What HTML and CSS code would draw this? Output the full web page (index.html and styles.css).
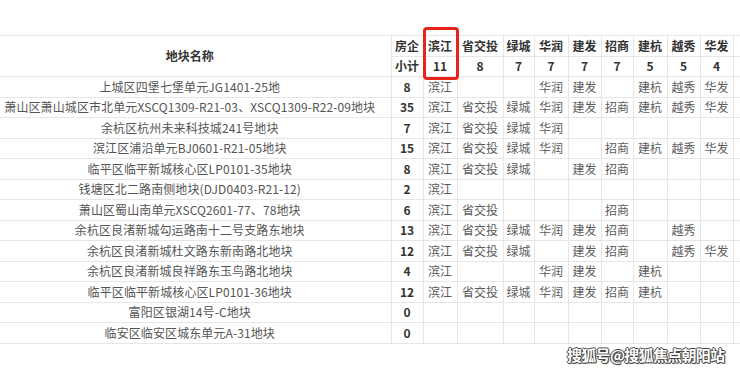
FILE: index.html
```html
<!DOCTYPE html>
<html lang="zh">
<head>
<meta charset="utf-8">
<title>地块名称</title>
<link rel="stylesheet" href="styles.css">
</head>
<body>
<div class="page">
  <table class="grid">
    <colgroup>
      <col class="c-name"><col class="c-sum"><col class="c-bj"><col class="c-sjt"><col class="c-lc"><col class="c-hr"><col class="c-jf"><col class="c-zs"><col class="c-jh"><col class="c-yx"><col class="c-hf"><col class="c-bl">
    </colgroup>
    <thead>
      <tr>
        <th rowspan="2" class="name">地块名称</th>
        <th>房企</th>
        <th class="hl">滨江<span class="mark"></span></th>
        <th>省交投</th><th>绿城</th><th>华润</th><th>建发</th><th>招商</th><th>建杭</th><th>越秀</th><th>华发</th><th>保利</th>
      </tr>
      <tr>
        <th>小计</th><th>11</th><th>8</th><th>7</th><th>7</th><th>7</th><th>7</th><th>5</th><th>5</th><th>4</th><th></th>
      </tr>
    </thead>
    <tbody>
      <tr><td class="name">上城区四堡七堡单元JG1401-25地</td><td class="n">8</td><td>滨江</td><td></td><td></td><td>华润</td><td>建发</td><td></td><td>建杭</td><td>越秀</td><td>华发</td><td>保利</td></tr>
      <tr><td class="name">萧山区萧山城区市北单元XSCQ1309-R21-03、XSCQ1309-R22-09地块</td><td class="n">35</td><td>滨江</td><td>省交投</td><td>绿城</td><td>华润</td><td>建发</td><td>招商</td><td>建杭</td><td>越秀</td><td>华发</td><td>保利</td></tr>
      <tr><td class="name">余杭区杭州未来科技城241号地块</td><td class="n">7</td><td>滨江</td><td>省交投</td><td>绿城</td><td>华润</td><td></td><td></td><td></td><td></td><td></td><td></td></tr>
      <tr><td class="name">滨江区浦沿单元BJ0601-R21-05地块</td><td class="n">15</td><td>滨江</td><td>省交投</td><td>绿城</td><td>华润</td><td></td><td>招商</td><td>建杭</td><td>越秀</td><td>华发</td><td>保利</td></tr>
      <tr><td class="name">临平区临平新城核心区LP0101-35地块</td><td class="n">8</td><td>滨江</td><td>省交投</td><td>绿城</td><td></td><td>建发</td><td>招商</td><td></td><td></td><td></td><td></td></tr>
      <tr><td class="name">钱塘区北二路南侧地块(DJD0403-R21-12)</td><td class="n">2</td><td>滨江</td><td></td><td></td><td></td><td></td><td></td><td></td><td></td><td></td><td></td></tr>
      <tr><td class="name">萧山区蜀山南单元XSCQ2601-77、78地块</td><td class="n">6</td><td>滨江</td><td>省交投</td><td></td><td></td><td></td><td>招商</td><td></td><td></td><td></td><td></td></tr>
      <tr><td class="name">余杭区良渚新城勾运路南十二号支路东地块</td><td class="n">13</td><td>滨江</td><td>省交投</td><td>绿城</td><td>华润</td><td>建发</td><td>招商</td><td></td><td>越秀</td><td></td><td>保利</td></tr>
      <tr><td class="name">余杭区良渚新城杜文路东新南路北地块</td><td class="n">12</td><td>滨江</td><td>省交投</td><td>绿城</td><td></td><td>建发</td><td>招商</td><td></td><td>越秀</td><td>华发</td><td></td></tr>
      <tr><td class="name">余杭区良渚新城良祥路东玉鸟路北地块</td><td class="n">4</td><td>滨江</td><td></td><td></td><td>华润</td><td>建发</td><td></td><td>建杭</td><td></td><td></td><td></td></tr>
      <tr><td class="name">临平区临平新城核心区LP0101-36地块</td><td class="n">12</td><td>滨江</td><td>省交投</td><td>绿城</td><td>华润</td><td>建发</td><td>招商</td><td>建杭</td><td></td><td></td><td></td></tr>
      <tr><td class="name">富阳区银湖14号-C地块</td><td class="n">0</td><td></td><td></td><td></td><td></td><td></td><td></td><td></td><td></td><td></td><td></td></tr>
      <tr><td class="name">临安区临安区城东单元A-31地块</td><td class="n">0</td><td></td><td></td><td></td><td></td><td></td><td></td><td></td><td></td><td></td><td></td></tr>
    </tbody>
  </table>
  <div class="watermark">搜狐号@搜狐焦点朝阳站</div>
</div>
</body>
</html>
```

FILE: styles.css
```css
html, body {
  margin: 0;
  padding: 0;
  background: #fff;
  overflow: hidden;
}
.page {
  position: relative;
  width: 740px;
  height: 373px;
  overflow: hidden;
  padding-top: 35px;
  box-sizing: border-box;
}
.grid {
  margin-left: -11px;
  border-collapse: collapse;
  table-layout: fixed;
  width: 784px;
  font-family: "Noto Sans CJK SC", "Noto Sans", sans-serif;
  font-size: 12px;
  color: #5c5c5c;
}
.c-name { width: 402px; }
.c-sum { width: 32px; }
.c-bj { width: 34px; }
.c-sjt { width: 46px; }
.c-lc { width: 31px; }
.c-hr { width: 34px; }
.c-jf { width: 33px; }
.c-zs { width: 32px; }
.c-jh { width: 34px; }
.c-yx { width: 33px; }
.c-hf { width: 33px; }
.c-bl { width: 40px; }
.grid tr { height: 20.5px; }
.grid th, .grid td {
  border: 1px solid #e6e6e6;
  padding: 0;
  text-align: center;
  white-space: nowrap;
  line-height: 18px;
  overflow: visible;
}
.grid th {
  font-weight: bold;
  color: #333;
}
.grid td.name {
  color: #555;
  border-left: none;
  letter-spacing: 0.1px;
}
.grid th.name { border-left: none; }
.grid td.n {
  font-weight: bold;
  color: #333;
}
.hl { position: relative; }
.mark {
  position: absolute;
  left: -1px;
  top: -9px;
  width: 36px;
  height: 53px;
  box-sizing: border-box;
  border: 3px solid #e8231c;
  border-radius: 4px;
}
.watermark {
  position: absolute;
  left: 567px;
  top: 344px;
  font-family: "Noto Sans CJK SC", sans-serif;
  font-size: 15px;
  font-weight: bold;
  color: #fff;
  letter-spacing: -0.7px;
  text-shadow: 1px 0 0 #444, -1px 0 0 #444, 0 1px 0 #444, 0 -1px 0 #444, 1px 1px 1px #555;
}
```
